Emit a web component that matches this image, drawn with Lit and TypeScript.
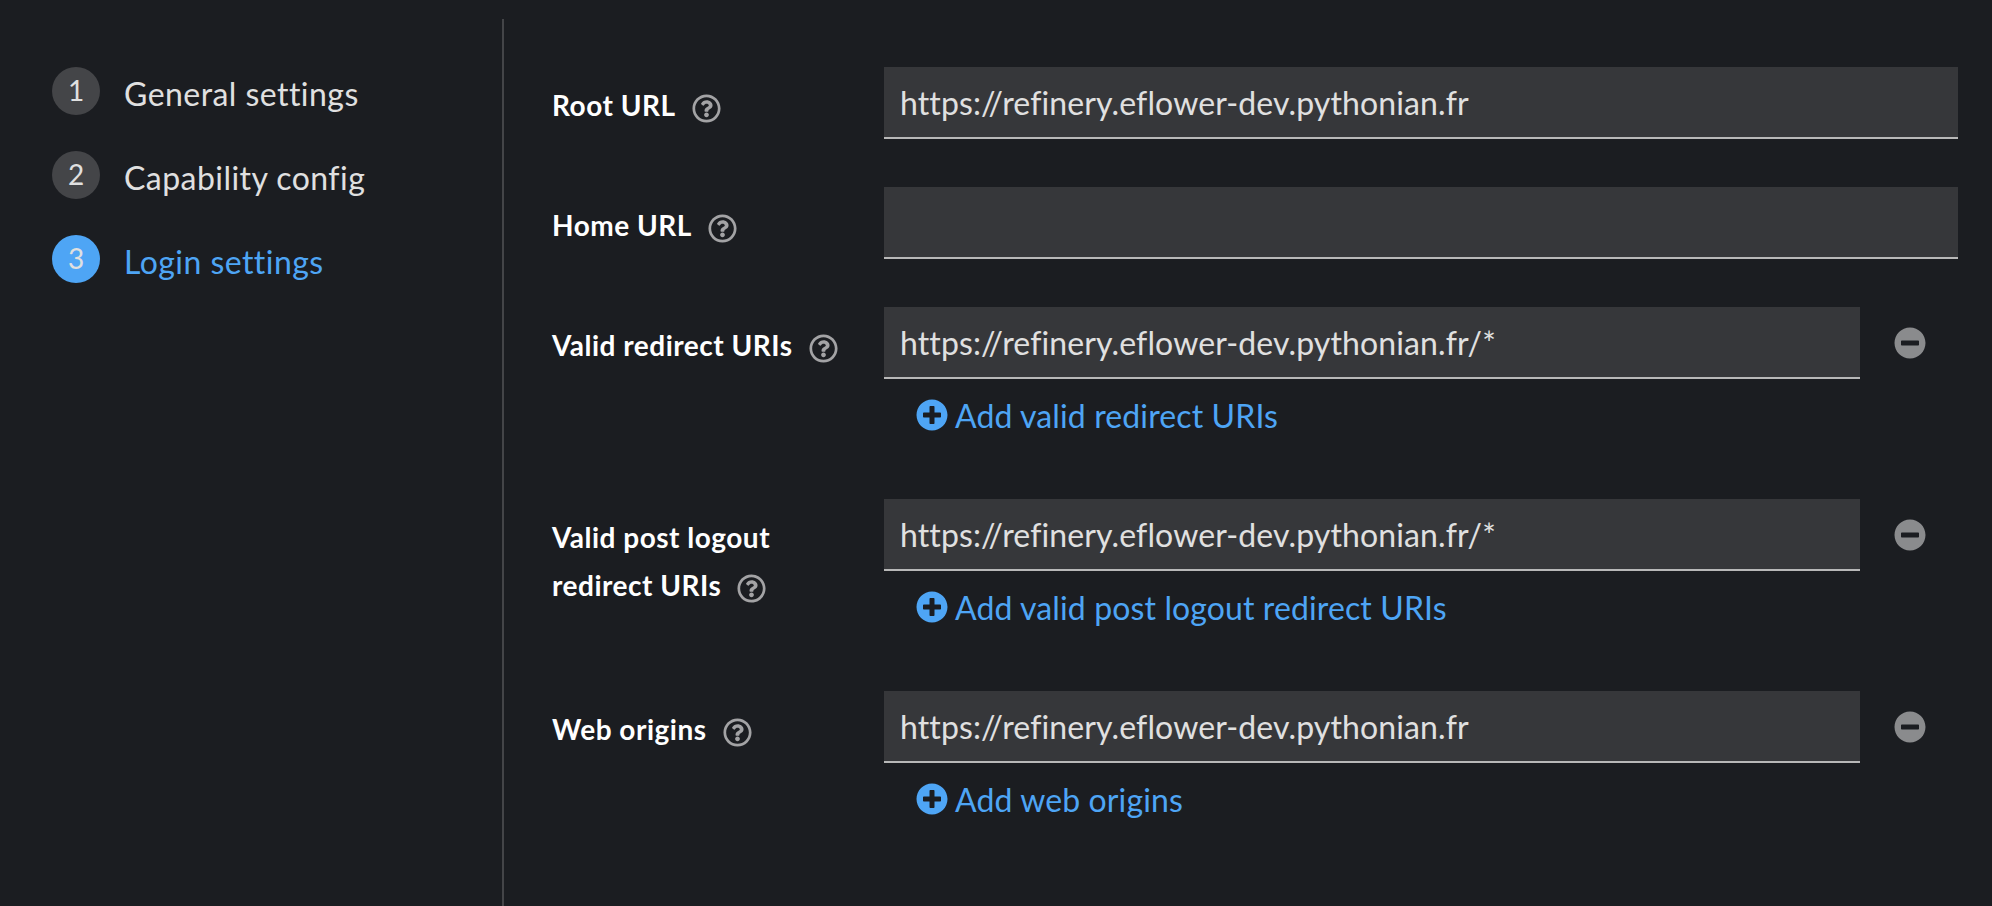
import { LitElement, html, css, svg } from "lit";
import { customElement } from "lit/decorators.js";

const help = svg`<path d="M256 8C119.043 8 8 119.083 8 256c0 136.997 111.043 248 248 248s248-111.003 248-248C504 119.083 392.957 8 256 8zm0 448c-110.532 0-200-89.431-200-200 0-110.495 89.472-200 200-200 110.491 0 200 89.471 200 200 0 110.53-89.431 200-200 200zm107.244-255.2c0 67.052-72.421 68.084-72.421 92.863V300c0 6.627-5.373 12-12 12h-45.647c-6.627 0-12-5.373-12-12v-8.659c0-35.745 27.1-50.034 47.579-61.516 17.561-9.845 28.324-16.541 28.324-29.579 0-17.246-21.999-28.693-39.784-28.693-23.189 0-33.894 10.977-48.942 29.969-4.057 5.12-11.46 6.071-16.666 2.124l-27.824-21.098c-5.107-3.872-6.251-11.066-2.644-16.363C184.846 131.491 214.94 112 261.794 112c49.071 0 101.45 38.304 101.45 88.8zM298 368c0 23.159-18.841 42-42 42s-42-18.841-42-42 18.841-42 42-42 42 18.841 42 42z"/>`;
const plus = svg`<path d="M256 8C119 8 8 119 8 256s111 248 248 248 248-111 248-248S393 8 256 8zm144 276c0 6.6-5.4 12-12 12h-92v92c0 6.6-5.4 12-12 12h-56c-6.6 0-12-5.4-12-12v-92h-92c-6.6 0-12-5.4-12-12v-56c0-6.6 5.4-12 12-12h92v-92c0-6.6 5.4-12 12-12h56c6.6 0 12 5.4 12 12v92h92c6.6 0 12 5.4 12 12v56z"/>`;
const minus = svg`<path d="M256 8C119 8 8 119 8 256s111 248 248 248 248-111 248-248S393 8 256 8zM124 296c-6.6 0-12-5.4-12-12v-56c0-6.6 5.4-12 12-12h264c6.6 0 12 5.4 12 12v56c0 6.6-5.4 12-12 12H124z"/>`;
const icon = (p: unknown, c: string) => html`<svg class=${c} viewBox="0 0 512 512" fill="currentColor">${p}</svg>`;

const url = "https://refinery.eflower-dev.pythonian.fr";
const rows = [
  { lines: ["Root URL"], value: url },
  { lines: ["Home URL"], value: "" },
  { lines: ["Valid redirect URIs"], value: url + "/*", add: "Add valid redirect URIs" },
  { lines: ["Valid post logout", "redirect URIs"], value: url + "/*", add: "Add valid post logout redirect URIs" },
  { lines: ["Web origins"], value: url, add: "Add web origins" },
];
const steps = ["General settings", "Capability config", "Login settings"];

@customElement("app-root")
export class AppRoot extends LitElement {
  static styles = css`
    :host { display: block; height: 100vh; overflow: hidden; background: #1b1d21; color: #e0e0e0; font-family: "Lato", "Noto Sans", sans-serif; font-variant-ligatures: none; }
    .page { display: flex; height: 100%; box-sizing: border-box; padding-top: 19px; }
    .nav { flex: none; box-sizing: border-box; border-right: 2px solid #444548; width: 504px; padding: 48px 0 0 52px; display: flex; flex-direction: column; gap: 36px; }
    .step { display: flex; align-items: center; gap: 24px; height: 48px; font-size: 32px; letter-spacing: 0.45px; }
    .num { width: 48px; height: 48px; border-radius: 50%; background: #444548; display: flex; align-items: center; justify-content: center; font-size: 28px; line-height: 1; letter-spacing: 0; padding-bottom: 2px; box-sizing: border-box; }
    .step span.t { position: relative; top: 2px; }
    .step.cur { color: #4ea5f5; }
    .step.cur .num { background: #4ea5f5; color: #e0e0e0; }
    .main { flex: 1; box-sizing: border-box; padding: 48px 34px 0 48px; display: flex; flex-direction: column; gap: 48px; }
    .row { display: grid; grid-template-columns: 332px 1fr; }
    .label { padding-top: 14px; font-size: 28px; font-weight: 700; line-height: 48px; color: #fff; letter-spacing: 0.5px; }
    .help { width: 29px; height: 29px; color: #a3a3a5; margin-left: 16px; vertical-align: -7px; }
    .field { display: flex; }
    .input { flex: 1; height: 72px; box-sizing: border-box; background: #36373a; border-bottom: 2px solid #b8b8b8; padding: 0 16px; font-size: 32px; line-height: 71px; color: #e0e0e0; white-space: nowrap; letter-spacing: 0.12px; }
    .rm { flex: none; width: 98px; display: flex; align-items: center; justify-content: center; padding-left: 2px; box-sizing: border-box; color: #8a8b8d; }
    .rm svg { width: 32px; height: 32px; }
    .add { display: flex; align-items: center; gap: 7px; margin-top: 21px; padding-left: 32px; height: 30px; font-size: 32px; color: #4ea5f5; letter-spacing: 0.12px; }
    .add svg { width: 32px; height: 32px; }
    .extra { padding-bottom: 21px; }
  `;
  render() {
    return html`<div class="page">
      <div class="nav">
        ${steps.map((s, i) => html`<div class="step ${i === 2 ? "cur" : ""}"><div class="num">${i + 1}</div><span class="t">${s}</span></div>`)}
      </div>
      <div class="main">
        ${rows.map((r) => html`<div class="row ${r.add ? "extra" : ""}">
          <div class="label">${r.lines.map((l, i) => html`${i ? html`<br />` : ""}${l}`)}${icon(help, "help")}</div>
          <div>
            <div class="field"><div class="input">${r.value}</div>${r.add ? html`<div class="rm">${icon(minus, "")}</div>` : ""}</div>
            ${r.add ? html`<div class="add">${icon(plus, "")}<span>${r.add}</span></div>` : ""}
          </div>
        </div>`)}
      </div>
    </div>`;
  }
}
